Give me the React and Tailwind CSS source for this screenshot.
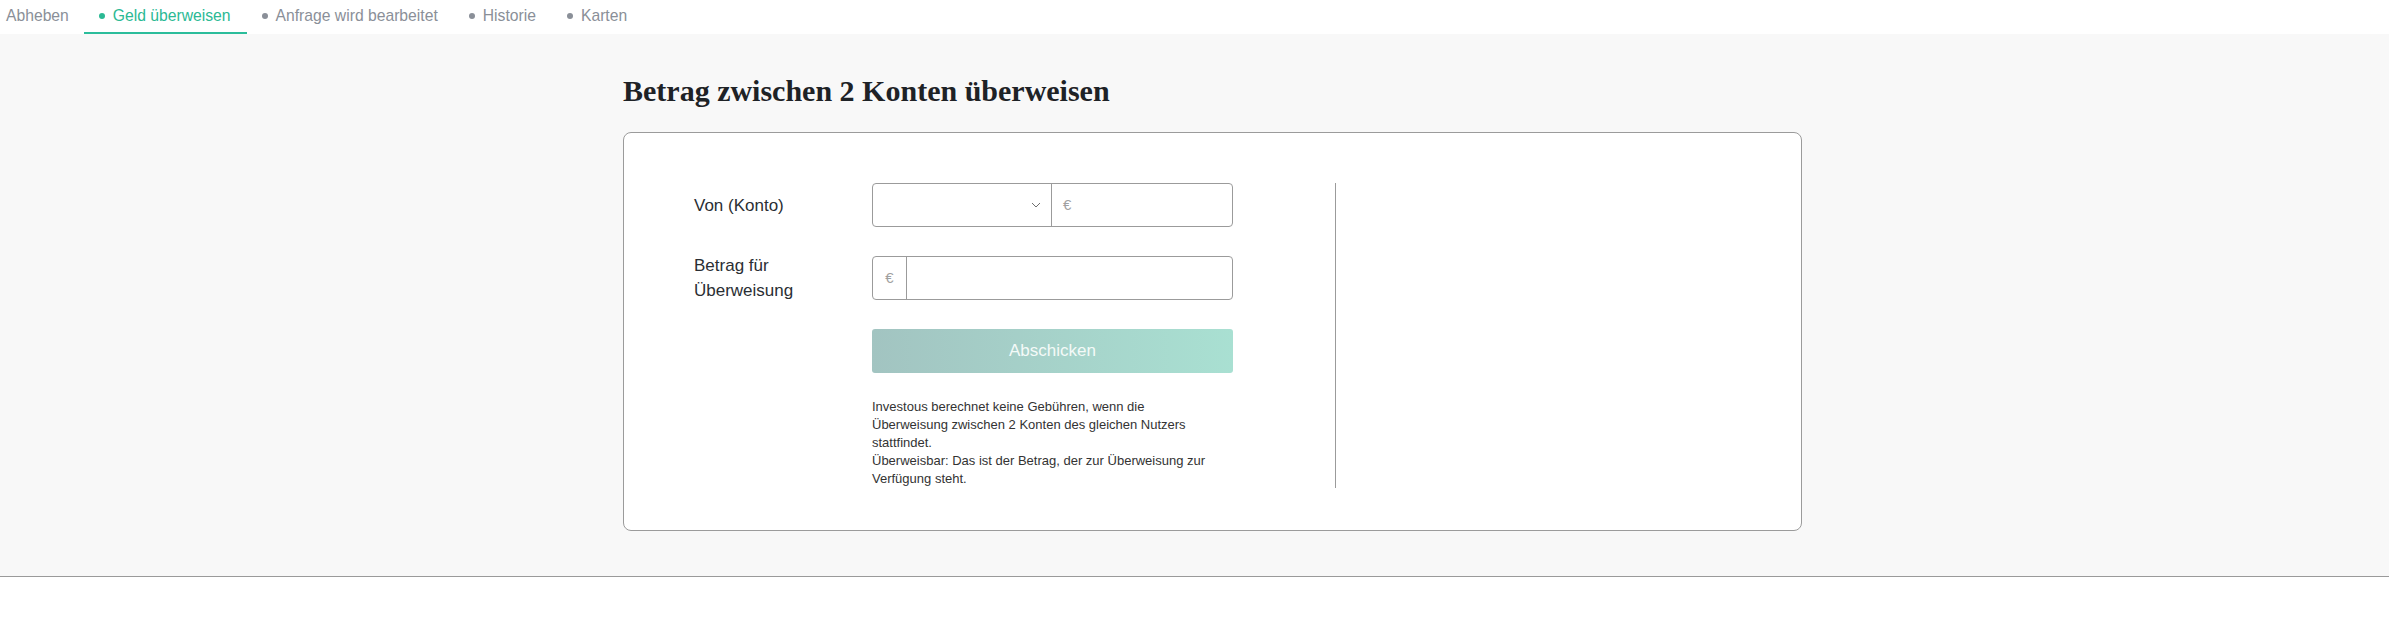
import React from "react";

const tabs = [
  { label: "Abheben", dot: false },
  { label: "Geld überweisen", dot: true, active: true },
  { label: "Anfrage wird bearbeitet", dot: true },
  { label: "Historie", dot: true },
  { label: "Karten", dot: true },
];

const Chevron = () => (
  <svg width="10" height="6" viewBox="0 0 10 6" fill="none">
    <polyline points="1,1 5,5 9,1" stroke="#6f6f6f" strokeWidth="1" />
  </svg>
);

const App = () => {
  return (
    <div className="min-h-screen bg-white font-['Liberation_Sans',Arial,sans-serif]">
      <nav className="flex h-[34px] items-stretch bg-white text-[15.7px]">
        {tabs.map((tab, idx) => (
          <div
            key={idx}
            className={`flex items-center gap-2 border-b-2 pb-[1px] ${
              idx === 0 ? "pl-[6px] pr-[15px]" : "pl-[15px] pr-[16px]"
            } ${tab.active ? "border-[#2bbd9b] text-[#2bb994]" : "border-transparent text-[#8a8f98]"}`}
          >
            {tab.dot && (
              <span
                className={`h-[6px] w-[6px] rounded-full ${tab.active ? "bg-[#2bb994]" : "bg-[#8a8f98]"}`}
              />
            )}
            <span>{tab.label}</span>
          </div>
        ))}
      </nav>

      <main className="border-b border-[#9a9a9a] bg-[#f8f8f8] pt-[39px] pb-[45px]">
        <div className="ml-[623px] w-[1179px]">
          <h1 className="mb-[23px] font-['Liberation_Serif',serif] text-[30px] font-bold leading-[36px] text-[#1e2226]">
            Betrag zwischen 2 Konten überweisen
          </h1>

          <div className="flex rounded-[8px] border border-[#9b9b9b] bg-white pt-[50px] pb-[42px] pl-[70px]">
            <div className="w-[642px] border-r border-[#9b9b9b]">
              <div className="grid grid-cols-[178px_361px] gap-y-[29px] text-[17px] text-[#2a2e33]">
                <div className="flex h-[44px] items-center leading-[25px]">Von (Konto)</div>
                <div className="flex h-[44px] rounded-[4px] border border-[#9b9b9b]">
                  <div className="flex w-[179px] items-center justify-end border-r border-[#9b9b9b] pr-[10px]">
                    <Chevron />
                  </div>
                  <div className="flex flex-1 items-center pl-[11px] text-[15px] text-[#a0a0a0]">€</div>
                </div>

                <div className="flex h-[44px] items-center leading-[25px]">
                  <div>
                    Betrag für
                    <br />
                    Überweisung
                  </div>
                </div>
                <div className="flex h-[44px] rounded-[4px] border border-[#9b9b9b]">
                  <div className="flex w-[34px] items-center justify-center border-r border-[#9b9b9b] text-[15px] text-[#a0a0a0]">
                    €
                  </div>
                  <div className="flex-1" />
                </div>

                <div />
                <button className="h-[44px] rounded-[3px] bg-gradient-to-r from-[#a2c4c1] to-[#a9e0d2] text-[17px] text-[#f4faf8]">
                  Abschicken
                </button>
              </div>

              <div className="ml-[178px] mt-[25px] w-[400px] text-[13px] leading-[18px] text-[#333333]">
                Investous berechnet keine Gebühren, wenn die
                <br />
                Überweisung zwischen 2 Konten des gleichen Nutzers
                <br />
                stattfindet.
                <br />
                Überweisbar: Das ist der Betrag, der zur Überweisung zur
                <br />
                Verfügung steht.
              </div>
            </div>
          </div>
        </div>
      </main>
    </div>
  );
};

export default App;
